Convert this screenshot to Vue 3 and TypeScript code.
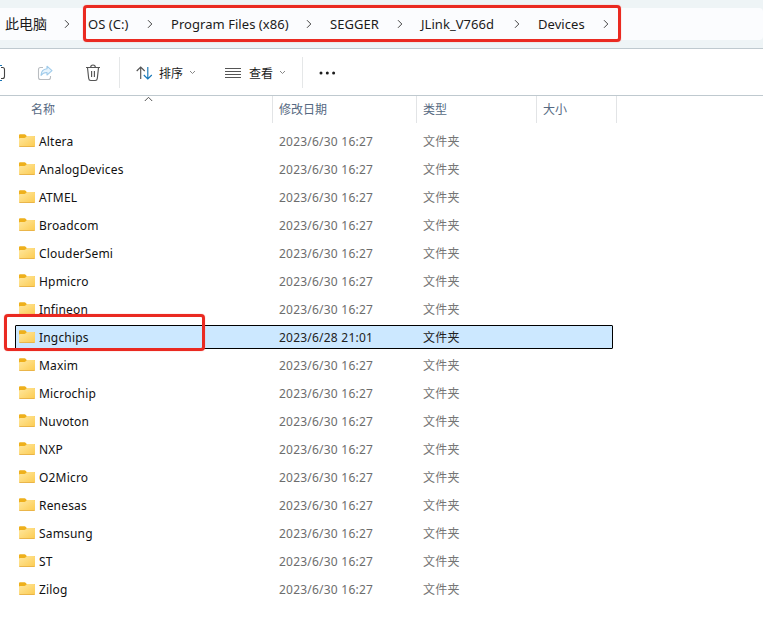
<script setup lang="ts">
interface Crumb { label: string; width: number }
interface Entry { name: string; modified: string; selected?: boolean }

const crumbs: Crumb[] = [
  { label: '此电脑', width: 83 },
  { label: 'OS (C:)', width: 83 },
  { label: 'Program Files (x86)', width: 159 },
  { label: 'SEGGER', width: 91 },
  { label: 'JLink_V766d', width: 117 },
  { label: 'Devices', width: 89 },
]

const usual = '2023/6/30 16:27'
const before = ['Altera', 'AnalogDevices', 'ATMEL', 'Broadcom', 'ClouderSemi', 'Hpmicro', 'Infineon']
const after = ['Maxim', 'Microchip', 'Nuvoton', 'NXP', 'O2Micro', 'Renesas', 'Samsung', 'ST', 'Zilog']
const toEntry = (name: string): Entry => ({ name, modified: usual })
const entries: Entry[] = [
  ...before.map(toEntry),
  { name: 'Ingchips', modified: '2023/6/28 21:01', selected: true },
  ...after.map(toEntry),
]
</script>

<template>
  <div class="window">
    <div class="address">
      <nav class="path">
        <span v-for="c in crumbs" :key="c.label" class="crumb" :style="{ width: c.width + 'px' }">
          <span>{{ c.label }}</span>
          <svg width="6" height="10" viewBox="0 0 6 10"><path d="M1 1.2 4.8 5 1 8.8" fill="none" stroke="#444" /></svg>
        </span>
      </nav>
      <div class="mark mark-path"></div>
    </div>

    <div class="toolbar">
      <svg class="rename" width="6" height="18" viewBox="0 0 6 18" fill="none">
        <path d="M0 1.5h2M0 16.5h2" stroke="#1975b5" />
        <path d="M1 3.5h1.5Q4.5 3.5 4.5 5.5v7q0 2-2 2H1" stroke="#444" stroke-width="1.1" />
      </svg>
      <svg class="share" width="16" height="16" viewBox="0 0 16 16" fill="none" stroke-linejoin="round">
        <path d="M6 2.5H3.5Q1.5 2.5 1.5 4.5v8q0 2 2 2h8q2 0 2-2V11" stroke="#b9bdc1" stroke-width="1.1" />
        <path d="M10 1.2 15 5.7 10 10V7.5Q6.2 7.3 4 10.3 4.3 4.3 10 3.8Z" fill="#e7f4fd" stroke="#a0cbea" stroke-width="1.1" />
      </svg>
      <svg class="trash" width="16" height="18" viewBox="0 0 16 18" fill="none" stroke="#555" stroke-width="1.15">
        <path d="M1 3.5h14M5.7 3.3a2.3 2.3 0 0 1 4.6 0M2.5 3.7l1.2 10.8q.2 2 2 2h4.6q1.8 0 2-2L13.5 3.7M6.6 7v6M9.4 7v6" />
      </svg>
      <i class="rule rule-a"></i>
      <div class="command sort">
        <svg width="17" height="14" viewBox="0 0 17 14" fill="none" stroke-width="1.15">
          <path d="M4.7 13V1M.7 5l4-4 4 4" stroke="#555" />
          <path d="M11.8 1v12M7.8 9l4 4 4-4" stroke="#1677b8" />
        </svg>
        <span>排序</span>
        <svg class="down" width="7" height="5" viewBox="0 0 7 5"><path d="m1 1 2.5 2.5L6 1" fill="none" stroke="#888" /></svg>
      </div>
      <div class="command view">
        <svg width="16" height="12" viewBox="0 0 16 12"><path d="M0 1.5h16M0 4.5h16M0 7.5h16M0 10.5h16" stroke="#555" /></svg>
        <span>查看</span>
        <svg class="down" width="7" height="5" viewBox="0 0 7 5"><path d="m1 1 2.5 2.5L6 1" fill="none" stroke="#888" /></svg>
      </div>
      <i class="rule rule-b"></i>
      <svg class="more" width="17" height="4" viewBox="0 0 17 4" fill="#1c1c1c"><circle cx="2" cy="2" r="1.5" /><circle cx="8.3" cy="2" r="1.5" /><circle cx="14.6" cy="2" r="1.5" /></svg>
    </div>

    <div class="head">
      <span class="col-name">名称
        <svg class="up" width="9" height="6" viewBox="0 0 9 6"><path d="m.8 5 3.7-3.7L8.2 5" fill="none" stroke="#555" /></svg>
      </span>
      <span>修改日期</span><span>类型</span><span>大小</span>
    </div>

    <div class="list">
      <div v-for="e in entries" :key="e.name" class="row" :class="{ selected: e.selected }">
        <div class="body">
          <span class="name">
            <svg width="16" height="14" viewBox="0 0 16 14">
              <defs>
                <linearGradient id="folder" x1="0" y1="0" x2="1" y2="1"><stop offset="0" stop-color="#ffe8a0" /><stop offset="1" stop-color="#fccb50" /></linearGradient>
              </defs>
              <path d="M0 1.3Q0 .3 1 .3h4.6q.6 0 1 .5L7.7 2H15q1 0 1 1v4H0Z" fill="#eeb01c" />
              <path d="M0 4.9Q0 4 1 4h4.4q.7 0 1.1-.4l1.1-1.3q.3-.3.9-.3H15q1 0 1 1v8.9q0 1-1 1H1q-1 0-1-1Z" fill="url(#folder)" />
              <path d="M.4 12.5h15.2" stroke="#e5ad43" stroke-width=".8" />
            </svg>
            <span class="label">{{ e.name }}</span>
          </span>
          <span class="date">{{ e.modified }}</span>
          <span class="kind">文件夹</span>
        </div>
        <div v-if="e.selected" class="mark mark-row"></div>
      </div>
    </div>
  </div>
</template>

<style>
body { margin: 0; overflow: hidden; background: #fff; }
</style>

<style scoped>
.window { width: 763px; height: 628px; overflow: hidden; background: #fff; font: 12px/16px "Noto Sans", "Noto Sans CJK SC", sans-serif; color: #1b1b1b; white-space: nowrap; }
svg { display: block; flex: none; }
.address { position: relative; padding: 8px 0; height: 32px; background: #eef4f6; border-bottom: 1px solid #bfc9cf; }
.path { display: flex; height: 32px; padding-left: 5px; background: #fbfcfe; border-radius: 0 4px 4px 0; font-size: 13px; }
.crumb { display: flex; flex: none; align-items: center; justify-content: space-between; box-sizing: border-box; padding-right: 18px; letter-spacing: .05px; }
.crumb:first-child { font-size: 14px; letter-spacing: 0; }
.mark { position: absolute; box-sizing: border-box; border: 3px solid #ea2a21; border-radius: 4px; box-shadow: 0 0 1px #f3706b; pointer-events: none; }
.mark-path { left: 83px; top: 5px; width: 538px; height: 37px; }
.mark-row { left: 4px; top: -9px; width: 201px; height: 37px; z-index: 1; }
.toolbar { display: flex; align-items: center; box-sizing: border-box; height: 47px; padding-top: 1px; border-bottom: 1px solid #bfc9cf; }
.share { margin-left: 31px; }
.trash { margin-left: 32px; }
.rule { width: 1px; height: 31px; background: #e5e7e8; }
.rule-a { margin-left: 18px; }
.rule-b { margin-left: 16px; }
.command { display: flex; align-items: center; }
.command span { padding-top: 2px; }
.sort { margin-left: 16px; }
.sort span { margin-left: 6px; }
.view { margin-left: 29px; }
.view span { margin-left: 8px; }
.down { margin-left: 6px; }
.more { margin-left: 16px; }
.head { display: grid; grid-template-columns: 273px 144px 120px 80px; height: 27px; color: #566982; }
.head > span { position: relative; box-sizing: border-box; padding: 6px 0 0 6px; border-right: 1px solid #e2e4e6; }
.head > .col-name { padding-left: 31px; }
.up { position: absolute; left: 144px; top: 0; }
.list { padding-top: 4px; }
.row { position: relative; height: 28px; padding: 2px 0; box-sizing: border-box; }
.body { box-sizing: border-box; display: grid; grid-template-columns: 263px 144px 120px; align-items: center; height: 24px; width: 598px; margin-left: 15px; border: 1px solid transparent; }
.name { display: flex; align-items: center; gap: 4px; padding-left: 3px; color: #111; letter-spacing: .18px; }
.label, .date, .kind { padding-top: 2px; }
.date { color: #6d6d6d; letter-spacing: .22px; }
.kind { color: #757575; letter-spacing: .2px; }
.selected .body { background: #cce8ff; border-color: #000; border-radius: 1px; }
.selected .date, .selected .kind { color: #222; }
</style>
